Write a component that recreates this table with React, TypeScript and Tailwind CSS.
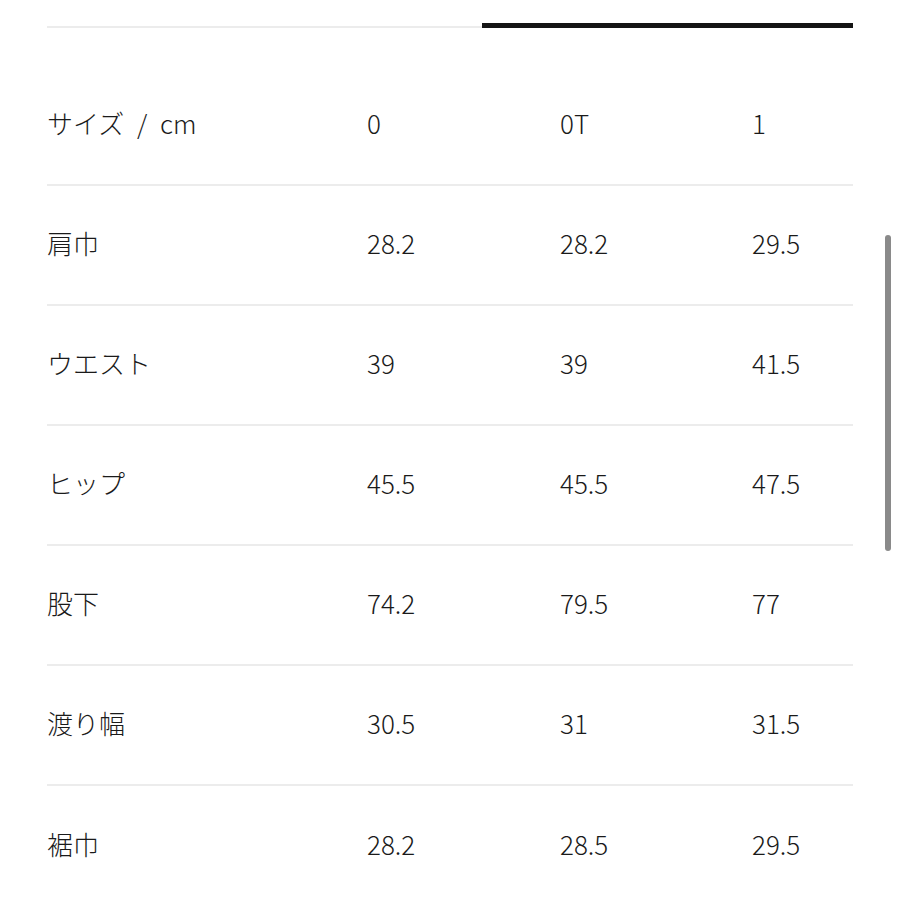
const rows: [string, string, string, string][] = [
  ["サイズ / cm", "0", "0T", "1"],
  ["肩巾", "28.2", "28.2", "29.5"],
  ["ウエスト", "39", "39", "41.5"],
  ["ヒップ", "45.5", "45.5", "47.5"],
  ["股下", "74.2", "79.5", "77"],
  ["渡り幅", "30.5", "31", "31.5"],
  ["裾巾", "28.2", "28.5", "29.5"],
];

export default function App() {
  return (
    <div className="relative h-[900px] w-[900px] overflow-hidden bg-white font-['Noto_Sans_CJK_JP',sans-serif] font-light text-[#1a1a1a]">
      <div className="mx-[47px] mt-[23px] flex items-end">
        <div className="h-[2px] w-[435px] bg-[#ececec]" />
        <div className="h-[5px] flex-1 bg-[#141414]" />
      </div>

      <div className="mx-[47px] mt-[38px]">
        {rows.map((row, i) => (
          <div
            key={row[0]}
            className={
              "grid h-[120px] grid-cols-[320px_193px_192px_1fr] items-center pb-[4px] text-[26px] leading-none " +
              (i < rows.length - 1 ? "border-b-2 border-[#ececec]" : "")
            }
          >
            <span className="[word-spacing:7px]">{row[0]}</span>
            <span>{row[1]}</span>
            <span>{row[2]}</span>
            <span>{row[3]}</span>
          </div>
        ))}
      </div>

      {/* scrollbar */}
      <div className="absolute left-[885px] top-[235px] h-[316px] w-[6px] rounded-full bg-[#8a8a8a]" />
    </div>
  );
}
